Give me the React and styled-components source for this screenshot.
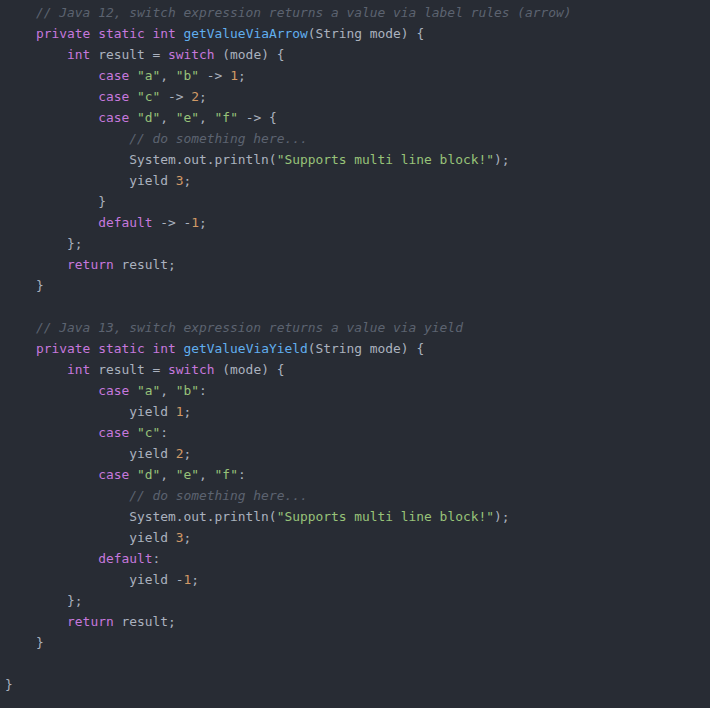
import React from "react";
import styled, { createGlobalStyle } from "styled-components";

const GlobalStyle = createGlobalStyle`
  html, body {
    margin: 0;
    padding: 0;
    background: #282c34;
  }
`;

const source = `    // Java 12, switch expression returns a value via label rules (arrow)
    private static int getValueViaArrow(String mode) {
        int result = switch (mode) {
            case "a", "b" -> 1;
            case "c" -> 2;
            case "d", "e", "f" -> {
                // do something here...
                System.out.println("Supports multi line block!");
                yield 3;
            }
            default -> -1;
        };
        return result;
    }

    // Java 13, switch expression returns a value via yield
    private static int getValueViaYield(String mode) {
        int result = switch (mode) {
            case "a", "b":
                yield 1;
            case "c":
                yield 2;
            case "d", "e", "f":
                // do something here...
                System.out.println("Supports multi line block!");
                yield 3;
            default:
                yield -1;
        };
        return result;
    }

}`;

const pattern =
  /(\/\/.*$)|("[^"]*")|\b(private|static|int|switch|case|default|return)\b|\b(getValueVia\w+)\b|\b(\d+)\b/g;

const kinds = [null, "comment", "string", "keyword", "fn", "number"];

function tokenize(line) {
  const out = [];
  let last = 0;
  let m;
  pattern.lastIndex = 0;
  while ((m = pattern.exec(line)) !== null) {
    if (m.index > last) out.push({ kind: "plain", text: line.slice(last, m.index) });
    const idx = m.findIndex((g, i) => i > 0 && g !== undefined);
    out.push({ kind: kinds[idx], text: m[0] });
    last = m.index + m[0].length;
  }
  if (last < line.length) out.push({ kind: "plain", text: line.slice(last) });
  return out;
}

const palette = {
  plain: "#abb2bf",
  comment: "#5c6370",
  string: "#98c379",
  keyword: "#c678dd",
  fn: "#61afef",
  number: "#d19a66",
};

const Editor = styled.pre`
  margin: 0;
  padding: 2px 0 0 5px;
  min-height: 100vh;
  box-sizing: border-box;
  background: #282c34;
  font-family: "DejaVu Sans Mono", "Liberation Mono", monospace;
  font-size: 12.9px;
  color: #abb2bf;
`;

const Line = styled.div`
  height: 21px;
  line-height: 21px;
  white-space: pre;
`;

const Token = styled.span`
  color: ${(p) => palette[p.$kind]};
  font-style: ${(p) => (p.$kind === "comment" ? "italic" : "normal")};
`;

export default function App() {
  return (
    <>
      <GlobalStyle />
      <Editor>
        {source.split("\n").map((line, i) => (
          <Line key={i}>
            {line === ""
              ? " "
              : tokenize(line).map((t, j) => (
                  <Token key={j} $kind={t.kind}>
                    {t.text}
                  </Token>
                ))}
          </Line>
        ))}
      </Editor>
    </>
  );
}
